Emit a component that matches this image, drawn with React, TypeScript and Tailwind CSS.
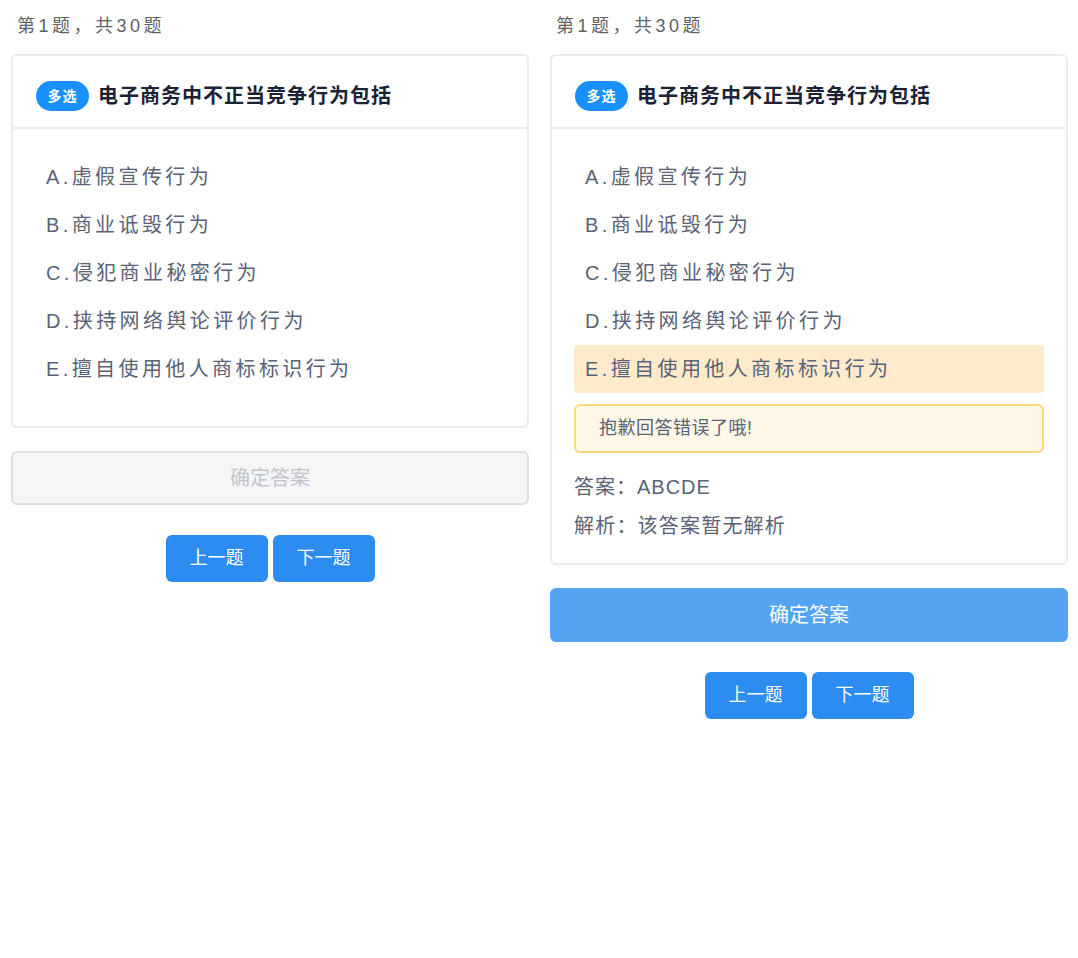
const FONT = { fontFamily: '"Liberation Sans", "Noto Sans CJK SC", sans-serif' };

const options = [
  "A.虚假宣传行为",
  "B.商业诋毁行为",
  "C.侵犯商业秘密行为",
  "D.挟持网络舆论评价行为",
  "E.擅自使用他人商标标识行为",
];

function QuizColumn(props: { answered?: boolean }) {
  const { answered } = props;
  return (
    <div className="w-[518px] shrink-0">
      <div className="pl-[6px] h-[24px] leading-[24px] text-[18px] tracking-[3.5px] text-[#606266]">第1题，共30题</div>
      <div className="mt-[16px] border-2 border-[#ebebeb] rounded-md bg-white">
        <div className="flex items-center pl-[23px] pt-[25px] pb-[16px] border-b-2 border-[#ebebeb]">
          <span className="h-[30px] w-[53px] rounded-full bg-[#1890ff] text-white text-[14px] font-bold flex items-center justify-center tracking-[1px]">
            多选
          </span>
          <span className="ml-[9px] text-[20px] font-bold text-[#1b2233] tracking-[1px]">电子商务中不正当竞争行为包括</span>
        </div>
        <div className={`px-[22px] pt-[24px] ${answered ? "pb-[18px]" : "pb-[33px]"}`}>
          {options.map((o, i) => (
            <div
              key={o}
              className={`h-[48px] flex items-center px-[11px] rounded-sm text-[20px] tracking-[3.4px] text-[#5a6275] ${
                answered && i === 4 ? "bg-[#ffebcc]" : ""
              }`}
            >
              {o}
            </div>
          ))}
          {answered && (
            <>
              <div className="mt-[11px] h-[49px] flex items-center pl-[23px] border-2 border-[#ffd77a] bg-[#fff8e6] rounded-md text-[18px] tracking-[0.5px] text-[#5a6275]">
                抱歉回答错误了哦!
              </div>
              <div className="h-[39px] mt-[14px] flex items-center text-[20px] tracking-[1px] text-[#5a6275]">答案：ABCDE</div>
              <div className="h-[39px] flex items-center text-[20px] tracking-[1.2px] text-[#5a6275]">解析：该答案暂无解析</div>
            </>
          )}
        </div>
      </div>
      {answered ? (
        <button className="mt-[23px] w-full h-[54px] rounded-md bg-[#55a4f4] text-white text-[20px]">确定答案</button>
      ) : (
        <button className="mt-[23px] w-full h-[54px] rounded-md border-2 border-[#dcdfe6] bg-[#f6f6f6] text-[#c0c4cc] text-[20px]">
          确定答案
        </button>
      )}
      <div className="mt-[30px] flex justify-center gap-[5px]">
        <button className="w-[102px] h-[47px] rounded-md bg-[#2d8cf0] text-white text-[18px]">上一题</button>
        <button className="w-[102px] h-[47px] rounded-md bg-[#2d8cf0] text-white text-[18px]">下一题</button>
      </div>
    </div>
  );
}

export default function App() {
  return (
    <div className="min-h-[958px] bg-white pl-[11px] pt-[14px] flex gap-[21px]" style={FONT}>
      <QuizColumn />
      <QuizColumn answered />
    </div>
  );
}
